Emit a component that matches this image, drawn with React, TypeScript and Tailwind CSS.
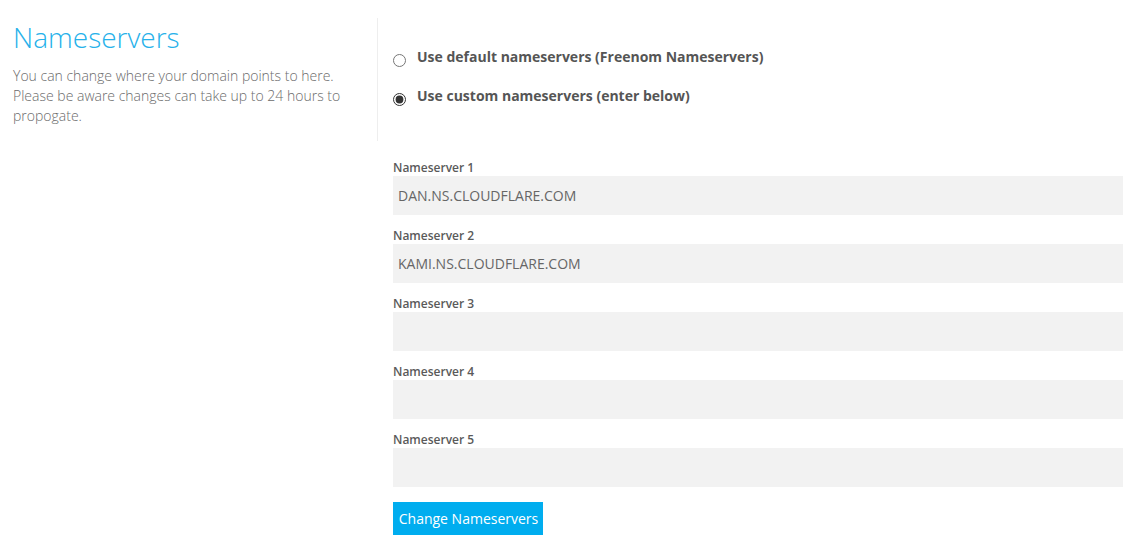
import { useState } from "react";

const servers = [
  "DAN.NS.CLOUDFLARE.COM",
  "KAMI.NS.CLOUDFLARE.COM",
  "",
  "",
  "",
];

export default function App() {
  const [mode, setMode] = useState<"default" | "custom">("custom");
  const [values, setValues] = useState<string[]>(servers);

  return (
    <div className="flex bg-white font-['Open_Sans',sans-serif] text-[#666]">
      <div className="w-[378px] shrink-0 pt-[18px] pl-[13px]">
        <div className="border-r border-[#eee] pr-4 pb-[15px]">
          <h1 className="text-[28px] font-light leading-[38px] text-[#26b1ea]">
            Nameservers
          </h1>
          <p className="mt-[10px] text-[14px] font-light leading-[20px] text-[#6b6b6b]">
            You can change where your domain points to here.
            <br />
            Please be aware changes can take up to 24 hours to propogate.
          </p>
        </div>
      </div>

      <div className="flex-1 pt-[47px] pl-[15px] pr-[5px]">
        <div className="flex flex-col gap-[19px]">
          <label className="flex items-center gap-[11px]">
            <input
              type="radio"
              name="ns"
              checked={mode === "default"}
              onChange={() => setMode("default")}
              className="mt-[6px] h-[13px] w-[13px] accent-[#333]"
            />
            <span className="text-[14px] font-bold leading-[20px] text-[#555]">
              Use default nameservers (Freenom Nameservers)
            </span>
          </label>
          <label className="flex items-center gap-[11px]">
            <input
              type="radio"
              name="ns"
              checked={mode === "custom"}
              onChange={() => setMode("custom")}
              className="mt-[6px] h-[13px] w-[13px] accent-[#333]"
            />
            <span className="text-[14px] font-bold leading-[20px] text-[#555]">
              Use custom nameservers (enter below)
            </span>
          </label>
        </div>

        <div className="mt-[53px] flex flex-col gap-[12px]">
          {values.map((v, i) => (
            <div key={i}>
              <div className="text-[12px] font-semibold leading-[17px] text-[#5a5a5a]">
                Nameserver {i + 1}
              </div>
              <input
                type="text"
                value={v}
                onChange={(e) => {
                  const next = [...values];
                  next[i] = e.target.value;
                  setValues(next);
                }}
                className="block h-[39px] w-full bg-[#f2f2f2] px-[5px] text-[14px] text-[#666] outline-none"
              />
            </div>
          ))}
        </div>

        <button className="mt-[15px] h-[33px] w-[150px] bg-[#00adef] pl-[1px] text-[14px] text-white">
          Change Nameservers
        </button>
      </div>
    </div>
  );
}
